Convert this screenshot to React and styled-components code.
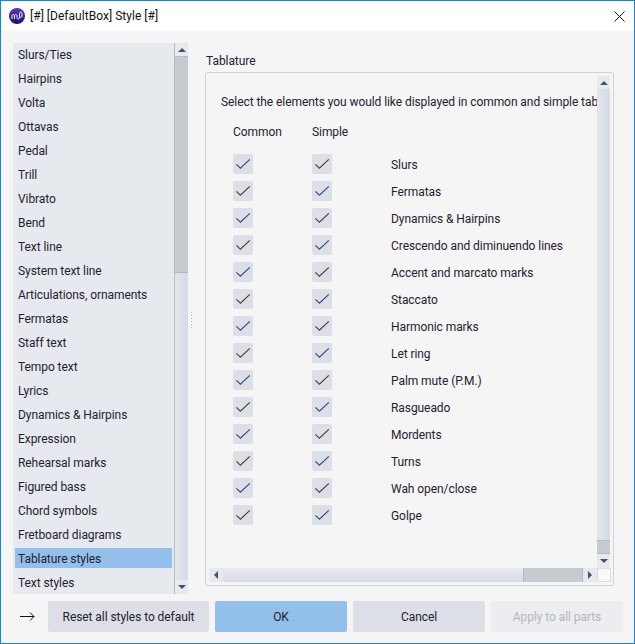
import styled, { createGlobalStyle } from 'styled-components';

const Global = createGlobalStyle`
  html, body { margin: 0; padding: 0; background: #f5f5f5; }
  * { box-sizing: border-box; }
`;

const Dialog = styled.div`
  width: 635px;
  height: 644px;
  display: flex;
  flex-direction: column;
  border: 1px solid #1583d8;
  background: #f5f5f5;
  color: #1f2230;
  font-family: Roboto, "Noto Sans", sans-serif;
  font-size: 12px;
  letter-spacing: -0.07px;
  overflow: hidden;
`;

const TitleBar = styled.div`
  height: 30px;
  flex: none;
  display: flex;
  align-items: center;
  background: #fff;
  padding-left: 8px;
  color: #111;
`;

const TitleText = styled.span`
  margin-left: 5px;
  flex: 1;
  letter-spacing: 0.03px;
`;

const CloseBtn = styled.div`
  width: 30px;
  height: 30px;
  display: flex;
  align-items: center;
  justify-content: center;
`;

const Body = styled.div`
  flex: 1;
  min-height: 0;
  display: flex;
  padding: 12px 20px 0 12px;
`;

const Sidebar = styled.div`
  width: 175px;
  height: 551px;
  flex: none;
  display: flex;
  background: #e6e9ee;
`;

const StyleList = styled.div`
  flex: 1;
  min-width: 0;
  overflow: hidden;
  padding: 0 2px;
  border-right: 1px solid #b9bdc2;
`;

const StyleItem = styled.div`
  height: 24px;
  padding: 0 3px;
  display: flex;
  align-items: center;
  ${p => p.$selected && `
    margin: 1px 0 3px;
    height: 20px;
    padding-top: 2px;
    background: #93bfeb;
  `}
`;

const Scroll = styled.div`
  display: flex;
  flex: none;
  ${p => (p.$horizontal
    ? `flex-direction: row; height: 14px; flex: 1;
       background: linear-gradient(180deg, #e9ebf0, #d8dce6);`
    : `flex-direction: column; width: 13px;
       background: linear-gradient(90deg, #e2e5ec, #d6dae4);`)}
`;

const ScrollBtn = styled.div`
  flex: none;
  ${p => (p.$horizontal ? 'width: 14px; height: 14px;' : `width: 13px; height: ${p.$short ? 13 : 14}px;`)}
  display: flex;
  align-items: center;
  justify-content: center;
  background: #e6e9ee;
`;

const Thumb = styled.div`
  flex: none;
  background: #c5cbcf;
  ${p => (p.$horizontal
    ? 'border-left: 1px solid #b4b8bd; border-right: 1px solid #b4b8bd;'
    : 'border-top: 1px solid #b9bdc2; border-bottom: 1px solid #b4b8bd;')}
`;

const Spacer = styled.div`
  flex: 1;
`;

const Arrow = styled.i`
  display: block;
  width: 0;
  height: 0;
  ${p => p.$dir === 'up' && 'border: 4px solid transparent; border-top: 0; border-bottom: 4px solid #4b4f68;'}
  ${p => p.$dir === 'down' && 'border: 4px solid transparent; border-bottom: 0; border-top: 4px solid #4b4f68;'}
  ${p => p.$dir === 'left' && 'border: 4px solid transparent; border-left: 0; border-right: 4px solid #4b4f68;'}
  ${p => p.$dir === 'right' && 'border: 4px solid transparent; border-right: 0; border-left: 4px solid #4b4f68;'}
`;

const Splitter = styled.div`
  width: 17px;
  flex: none;
  display: flex;
  align-items: center;
  padding: 3px 0 0 3px;
  height: 551px;
`;

const Grip = styled.div`
  display: grid;
  gap: 2px;
  & > span {
    display: block;
    width: 1px;
    height: 1px;
    background: #a9adb3;
  }
`;

const Main = styled.div`
  flex: 1;
  min-width: 0;
  display: flex;
  flex-direction: column;
  height: 543px;
`;

const SectionTitle = styled.div`
  height: 29px;
  padding: 10px 0 0 1px;
  line-height: 16px;
`;

const Panel = styled.div`
  flex: 1;
  min-height: 0;
  display: grid;
  grid-template-columns: 1fr 14px;
  grid-template-rows: 1fr 14px;
  padding: 3px 2px 3px 3px;
  border: 1px solid #cfd1d3;
  border-radius: 3px;
`;

const Viewport = styled.div`
  overflow: hidden;
  min-width: 0;
  min-height: 0;
  padding: 18px 0 0 12px;
  white-space: nowrap;
`;

const Intro = styled.div`
  height: 16px;
  line-height: 16px;
`;

const Grid = styled.div`
  display: grid;
  grid-template-columns: 79px 79px 1fr;
  grid-template-rows: 27px 5px;
  grid-auto-rows: 27px;
  margin: 8px 0 0 12px;
  align-items: center;
`;

const Row = styled.div`
  display: contents;
`;

const HeadGap = styled.div`
  grid-column: 1 / -1;
`;

const Check = styled.div`
  width: 20px;
  height: 20px;
  display: flex;
  align-items: center;
  justify-content: center;
  background: #dcdfe6;
  border-radius: 2px;
`;

const RowLabel = styled.div`
  padding-top: 2px;
`;

const Corner = styled.div`
  background: #f8f8f8;
  border: 1px solid #dcdde0;
`;

const Footer = styled.div`
  flex: none;
  height: 46px;
  display: flex;
  align-items: flex-start;
  padding: 4px 11px 0 0;
`;

const ArrowBox = styled.div`
  width: 47px;
  height: 31px;
  flex: none;
  display: flex;
  align-items: center;
  padding-left: 19px;
`;

const Button = styled.div`
  width: ${p => p.$width || 132}px;
  height: 31px;
  margin-right: 6px;
  flex: none;
  display: flex;
  align-items: center;
  justify-content: center;
  border-radius: 2px;
  background: ${p => (p.$accent ? '#93bfeb' : p.$disabled ? '#ecedf0' : '#dcdfe6')};
  color: ${p => (p.$disabled ? '#b4b7c1' : 'inherit')};
  &:last-child { margin-right: 0; }
`;

const items = [
  'Slurs/Ties', 'Hairpins', 'Volta', 'Ottavas', 'Pedal', 'Trill', 'Vibrato', 'Bend', 'Text line',
  'System text line', 'Articulations, ornaments', 'Fermatas', 'Staff text', 'Tempo text', 'Lyrics',
  'Dynamics & Hairpins', 'Expression', 'Rehearsal marks', 'Figured bass', 'Chord symbols',
  'Fretboard diagrams', 'Tablature styles', 'Text styles',
];

const rows = [
  'Slurs', 'Fermatas', 'Dynamics & Hairpins', 'Crescendo and diminuendo lines', 'Accent and marcato marks',
  'Staccato', 'Harmonic marks', 'Let ring', 'Palm mute (P.M.)', 'Rasgueado', 'Mordents', 'Turns',
  'Wah open/close', 'Golpe',
];

const Tick = ({ warm }) => (
  <svg width="14" height="10" viewBox="0 0 14 10" fill="none">
    <path d="M0.4 5.4 L4.4 9.2 L13.8 0.4" stroke={warm ? '#4d3b45' : '#2b4a86'} strokeWidth="1.1" />
  </svg>
);

const Logo = () => (
  <svg width="16" height="16" viewBox="0 0 16 16">
    <defs>
      <linearGradient id="logoBg" x1="0" y1="0" x2="0" y2="1">
        <stop offset="0" stopColor="#5a35b8" />
        <stop offset="1" stopColor="#1a0f7a" />
      </linearGradient>
    </defs>
    <circle cx="8" cy="8" r="8" fill="url(#logoBg)" />
    <path d="M3 11V8C3 6 5.5 6 5.5 8V11M5.5 8C5.5 6 8 6 8 8V9.5C8 11.5 10.5 11.5 10.5 9.5V5.5C10.5 3.8 13 3.8 13 5.5V8C13 10 10.5 9.5 10.5 8" fill="none" stroke="#fff" strokeWidth="1" />
  </svg>
);

const App = () => (
  <Dialog>
    <Global />
    <TitleBar>
      <Logo />
      <TitleText>[#] [DefaultBox] Style [#]</TitleText>
      <CloseBtn>
        <svg width="11" height="11" viewBox="0 0 11 11">
          <path d="M0.5 0.5 L10.5 10.5 M10.5 0.5 L0.5 10.5" stroke="#111" strokeWidth="1" />
        </svg>
      </CloseBtn>
    </TitleBar>
    <Body>
      <Sidebar>
        <StyleList>
          {items.map(item => (
            <StyleItem key={item} $selected={item === 'Tablature styles'}>{item}</StyleItem>
          ))}
        </StyleList>
        <Scroll>
          <ScrollBtn $short><Arrow $dir="up" /></ScrollBtn>
          <Thumb style={{ height: 217 }} />
          <Spacer />
          <ScrollBtn><Arrow $dir="down" /></ScrollBtn>
        </Scroll>
      </Sidebar>
      <Splitter>
        <Grip>{[0, 1, 2, 3, 4, 5].map(i => <span key={i} />)}</Grip>
      </Splitter>
      <Main>
        <SectionTitle>Tablature</SectionTitle>
        <Panel>
          <Viewport>
            <Intro>Select the elements you would like displayed in common and simple tablature staves</Intro>
            <Grid>
              <Row>
                <div>Common</div>
                <div>Simple</div>
                <div />
              </Row>
              <HeadGap />
              {rows.map((row, i) => (
                <Row key={row}>
                  <Check><Tick warm={i % 2 === 1} /></Check>
                  <Check><Tick warm={i % 2 === 0} /></Check>
                  <RowLabel>{row}</RowLabel>
                </Row>
              ))}
            </Grid>
          </Viewport>
          <Scroll>
            <ScrollBtn $short><Arrow $dir="up" /></ScrollBtn>
            <Spacer />
            <Thumb style={{ height: 14 }} />
            <ScrollBtn><Arrow $dir="down" /></ScrollBtn>
          </Scroll>
          <Scroll $horizontal>
            <ScrollBtn $horizontal><Arrow $dir="left" /></ScrollBtn>
            <Spacer />
            <Thumb $horizontal style={{ width: 60 }} />
            <ScrollBtn $horizontal><Arrow $dir="right" /></ScrollBtn>
          </Scroll>
          <Corner />
        </Panel>
      </Main>
    </Body>
    <Footer>
      <ArrowBox>
        <svg width="15" height="9" viewBox="0 0 15 9" fill="none">
          <path d="M0 4.5 H14 M10 0.5 L14 4.5 L10 8.5" stroke="#111" strokeWidth="1" />
        </svg>
      </ArrowBox>
      <Button $width={161}>Reset all styles to default</Button>
      <Button $accent>OK</Button>
      <Button>Cancel</Button>
      <Button $disabled>Apply to all parts</Button>
    </Footer>
  </Dialog>
);

export default App;
